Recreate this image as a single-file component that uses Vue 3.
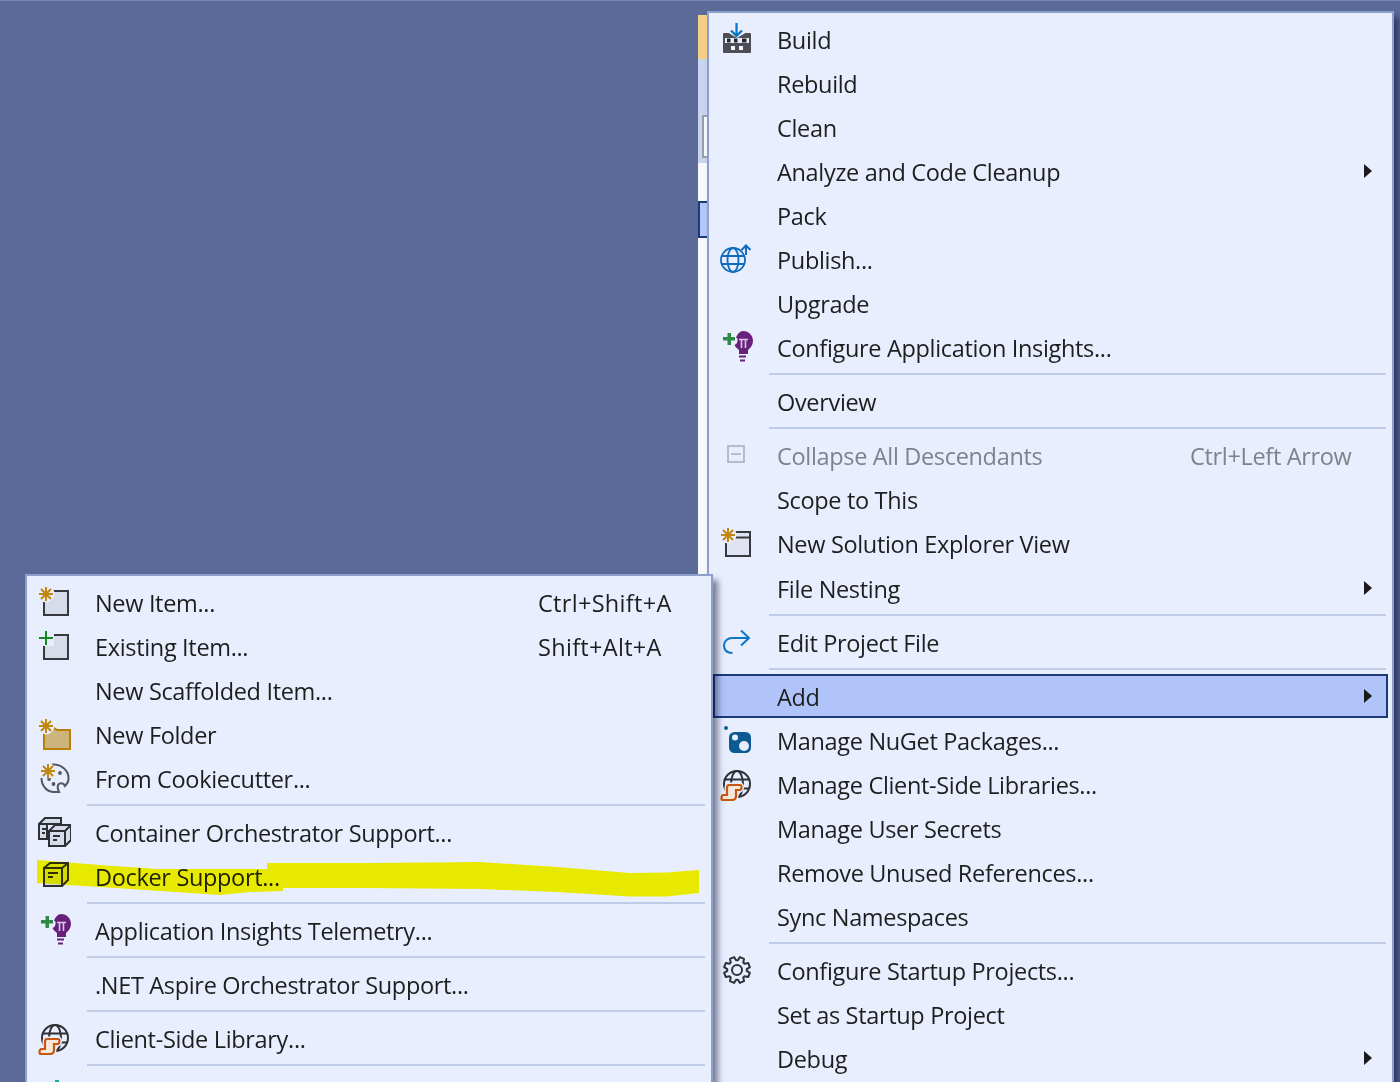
<script setup>
const mainItems = [
  { label: 'Build', icon: 'build' },
  { label: 'Rebuild' },
  { label: 'Clean' },
  { label: 'Analyze and Code Cleanup', sub: true },
  { label: 'Pack' },
  { label: 'Publish...', icon: 'publish' },
  { label: 'Upgrade' },
  { label: 'Configure Application Insights...', icon: 'insights' },
  { sep: true },
  { label: 'Overview' },
  { sep: true },
  { label: 'Collapse All Descendants', icon: 'collapse', shortcut: 'Ctrl+Left Arrow', disabled: true },
  { label: 'Scope to This' },
  { label: 'New Solution Explorer View', icon: 'newwin' },
  { label: 'File Nesting', sub: true, nudge: true },
  { sep: true },
  { label: 'Edit Project File', icon: 'edit' },
  { sep: true },
  { label: 'Add', sub: true, active: true },
  { label: 'Manage NuGet Packages...', icon: 'nuget' },
  { label: 'Manage Client-Side Libraries...', icon: 'globe' },
  { label: 'Manage User Secrets' },
  { label: 'Remove Unused References...' },
  { label: 'Sync Namespaces' },
  { sep: true },
  { label: 'Configure Startup Projects...', icon: 'gear' },
  { label: 'Set as Startup Project' },
  { label: 'Debug', sub: true }
]
const addItems = [
  { label: 'New Item...', icon: 'newitem', shortcut: 'Ctrl+Shift+A' },
  { label: 'Existing Item...', icon: 'existing', shortcut: 'Shift+Alt+A' },
  { label: 'New Scaffolded Item...' },
  { label: 'New Folder', icon: 'folder' },
  { label: 'From Cookiecutter...', icon: 'cookie' },
  { sep: true },
  { label: 'Container Orchestrator Support...', icon: 'containers' },
  { label: 'Docker Support...', icon: 'box' },
  { sep: true },
  { label: 'Application Insights Telemetry...', icon: 'insights' },
  { sep: true },
  { label: '.NET Aspire Orchestrator Support...' },
  { sep: true },
  { label: 'Client-Side Library...', icon: 'globe' },
  { sep: true },
  { label: '', icon: 'teal' }
]
const menus = [
  { cls: 'main', items: mainItems },
  { cls: 'add', items: addItems }
]
const starred = ['newwin', 'newitem', 'folder']
const gearPath = (() => {
  const pts = []
  const teeth = 8
  const p = (r, t) => `${(20 + r * Math.cos(t)).toFixed(2)} ${(16 + r * Math.sin(t)).toFixed(2)}`
  for (let i = 0; i < teeth; i++) {
    const a = (i / teeth) * Math.PI * 2 + Math.PI / 8
    pts.push(p(9.8, a - 0.3), p(13.2, a - 0.17), p(13.2, a + 0.17), p(9.8, a + 0.3))
  }
  return 'M' + pts.join('L') + 'Z'
})()
</script>

<template>
  <div class="stage">
    <div class="behind">
      <div class="b-orange"></div>
      <div class="b-tool"><div class="b-input"></div></div>
      <div class="b-white"></div>
      <div class="b-sel"></div>
      <div class="b-rest"></div>
    </div>

    <div v-for="menu in menus" :key="menu.cls" class="menu" :class="menu.cls">
      <template v-for="(item, i) in menu.items" :key="i">
        <div v-if="item.sep" class="sep"></div>
        <div v-else class="row" :class="{ active: item.active, disabled: item.disabled, nudge: item.nudge }">
          <div class="icon">
            <svg v-if="item.icon" width="36" height="36" viewBox="0 0 36 36">
              <g v-if="item.icon === 'build'">
                <path d="M6 11a1 1 0 0 1 1-1h26a1 1 0 0 1 1 1v18a1 1 0 0 1-1 1H7a1 1 0 0 1-1-1z" fill="#4d4e55"/>
                <rect x="8" y="15" width="24" height="5" fill="#e8eefe"/>
                <rect x="10" y="15.500" width="3.500" height="4" fill="#26272c"/>
                <rect x="17" y="15.500" width="3.500" height="4" fill="#26272c"/>
                <rect x="25" y="15.500" width="4.500" height="4" fill="#26272c"/>
                <rect x="14" y="23" width="4" height="4" fill="#f6f8ff"/>
                <rect x="22" y="23" width="4" height="4" fill="#f6f8ff"/>
                <path d="M10 9h20l-10 6z" fill="#e8eefe"/>
                <path d="M19.500 0v12.500M14 7.500l5.500 5.500 5.500-5.500" fill="none" stroke="#0a72c4" stroke-width="2.200"/>
              </g>
              <g v-else-if="item.icon === 'publish'" fill="none" stroke="#0f6cbd" stroke-width="1.800">
                <circle cx="16" cy="17" r="12"/>
                <ellipse cx="16" cy="17" rx="5.500" ry="12"/>
                <path d="M5 13h22M5 21h22"/>
                <path d="M29 12V3M24.500 7l4.500-4.500L33.500 7" stroke-width="2"/>
              </g>
              <g v-else-if="item.icon === 'insights'">
                <path d="M6 6h4.500V2h3.500v4H18v3.500h-4V14h-3.500V9.500H6z" fill="#2d8a45"/>
                <path d="M26 0c6 0 10 4.500 10 10 0 4-2.500 7-5 9v4h-9v-4c-2-1.500-3.500-3-4.500-5 2-1 3-2.500 3-4.500V8.500c0-1-.500-1.500-1.500-2C20.500 3 23 0 26 0z" fill="#68217a"/>
                <path d="M22 8.500h9M24.500 8.500V17M28.500 8.500V17" stroke="#d9c6e6" stroke-width="1.600"/>
                <path d="M22 25.500h7M23 29.500h5" stroke="#68217a" stroke-width="2"/>
              </g>
              <g v-else-if="item.icon === 'collapse'" fill="none" stroke="#b5bbcf" stroke-width="2">
                <rect x="11" y="7" width="16" height="16"/>
                <path d="M14 15h10"/>
              </g>
              <g v-else-if="item.icon === 'newwin' || item.icon === 'newitem' || item.icon === 'existing'">
                <path d="M9 5h24v24H9z" :fill="item.icon === 'newwin' ? '#dfe3f2' : '#d6dcea'" stroke="#37393f" stroke-width="2"/>
                <path v-if="item.icon === 'newwin'" d="M15 10.500h18" stroke="#37393f" stroke-width="2"/>
                <template v-if="item.icon === 'existing'">
                  <path d="M3 0h16v16H3z" fill="#e8eefe"/>
                  <path d="M11 1v14M4 8h14" stroke="#138a1f" stroke-width="2"/>
                </template>
              </g>
              <g v-else-if="item.icon === 'edit'" fill="none" stroke="#0f76c5" stroke-width="2">
                <path d="M15.500 27C10 27 7 24 7 19.500 7 15 11 12 15 12H31"/>
                <path d="M24 4.500l8 7.500-8 7.500"/>
              </g>
              <g v-else-if="item.icon === 'nuget'">
                <circle cx="9" cy="4" r="2" fill="#0d5a93"/>
                <rect x="12" y="8" width="22" height="21" rx="5.500" fill="#0d5a93"/>
                <circle cx="18" cy="13.500" r="3" fill="#e8eefe"/>
                <circle cx="27" cy="22" r="5" fill="#e8eefe"/>
              </g>
              <g v-else-if="item.icon === 'globe'">
                <g fill="none" stroke="#2f3136" stroke-width="2">
                  <circle cx="20" cy="16" r="13"/>
                  <ellipse cx="20" cy="16" rx="6" ry="13"/>
                  <path d="M8 11.500h24M8 20.500h24"/>
                </g>
                <path d="M12 17H23C25 17 25 21 23 22H19V28C19 31 17 32 15 32H6C4 32 4 28 6 27H10V20C10 18 11 17 12 17Z" fill="#f8e8dc" stroke="#e8eefe" stroke-width="5"/>
                <path d="M12 17H23C25 17 25 21 23 22H19V28C19 31 17 32 15 32H6C4 32 4 28 6 27H10V20C10 18 11 17 12 17Z" fill="#f8e8dc" stroke="#c9560f" stroke-width="2.200"/>
              </g>
              <g v-else-if="item.icon === 'gear'" fill="none" stroke="#303236" stroke-width="2" stroke-linejoin="round">
                <path :d="gearPath"/>
                <circle cx="20" cy="16" r="5"/>
              </g>
              <g v-else-if="item.icon === 'folder'">
                <path d="M9 12h8l2-2 3 2h13v19H9z" fill="#cdb47d" stroke="#b87f0b" stroke-width="2"/>
              </g>
              <g v-else-if="item.icon === 'cookie'">
                <path d="M17 2.600C26 2 34 8 33.500 17 33.500 20 32 22 30 24 28 20 24 21 23 23 22 26 23 28 24 30 22 30 21 30 19 30 12 30 6.500 24 6.500 16" fill="none" stroke="#55585e" stroke-width="2"/>
                <circle cx="14" cy="17" r="1.900" fill="#55585e"/>
                <circle cx="18.500" cy="22" r="1.900" fill="#55585e"/>
                <circle cx="25" cy="11" r="1.900" fill="#55585e"/>
                <circle cx="12" cy="8.500" r="8" fill="#e8eefe"/>
                <path d="M13 2v14M6 9h14M8 4l10 10M18 4 8 14" stroke="#c1860e" stroke-width="2"/>
              </g>
              <g v-else-if="item.icon === 'containers'" fill="none" stroke="#2e3036" stroke-width="2">
                <path d="M4 8l6-6h16v6H12v15H4z" fill="#d6dcea"/>
                <path d="M4 8h14" />
                <path d="M7 13h5M7 17h3"/>
                <path d="M14 15h16v15H14zM14 15l6-6h16v15l-6 6M30 15l6-6" fill="#d6dcea"/>
                <path d="M18 20h7M18 24h4"/>
              </g>
              <g v-else-if="item.icon === 'box'" fill="none" stroke="#2e3036" stroke-width="2">
                <path d="M9 8h18v18H9zM9 8l6-5h18v17l-6 6M27 8l6-5" fill="#d6dcea"/>
                <path d="M13 13h10M13 17h5"/>
              </g>
              <rect v-else-if="item.icon === 'teal'" x="20" y="4" width="4" height="6" fill="#1aa89a"/>
              <g v-if="starred.includes(item.icon)">
                <circle cx="11" cy="8" r="8.500" fill="#e8eefe"/>
                <path d="M11 1v14M4 8h14M6 3l10 10M16 3 6 13" stroke="#c1860e" stroke-width="2"/>
              </g>
            </svg>
          </div>
          <span class="label">{{ item.label }}</span>
          <span v-if="item.shortcut" class="shortcut">{{ item.shortcut }}</span>
          <svg v-if="item.sub" class="chev" width="8" height="14" viewBox="0 0 8 14"><path d="M0 0 8 7 0 14z" fill="#1a1a1a"/></svg>
        </div>
      </template>
    </div>

    <svg class="marker" width="680" height="48" viewBox="0 0 680 48">
      <path d="M0 2 63 7 120 11 230 11 230 5 330 5 443 4 520 9 593 15 630 14.500 662 12V35L630 38.500 593 38.500 520 34 443 31 330 30 246 30 246 33 213 34 183 37 63 29 0 25Z" fill="#e9e900"/>
    </svg>
  </div>
</template>

<style>
html, body { margin: 0; background: #5b6b99; }
</style>

<style scoped>
.stage {
  position: relative;
  width: 1400px;
  height: 1082px;
  overflow: hidden;
  background: #5b6a98;
  box-shadow: inset 0 1px 0 #7a88b0;
  font-family: "Open Sans", "Noto Sans", sans-serif;
  color: #1e1e1e;
}
.behind {
  position: absolute;
  left: 698px;
  top: 15px;
  width: 20px;
  height: 570px;
  display: flex;
  flex-direction: column;
}
.b-orange { height: 44px; background: #f6cf87; }
.b-tool { height: 104px; background: #c9d4ef; padding: 56px 0 0 4px; box-sizing: border-box; }
.b-input { height: 43px; box-sizing: border-box; background: #f7f9ff; border: 2px solid #9a9ea8; }
.b-white { height: 38px; background: #f7f9ff; }
.b-sel { height: 37px; box-sizing: border-box; background: #b4c7f8; border: 2px solid #1c3a74; }
.b-rest { flex: 1; background: #f7f9ff; }

.menu {
  position: absolute;
  box-sizing: border-box;
  background: #e8eefe;
  border: 2px solid #8f9fcb;
  box-shadow: 5px 6px 6px rgba(10, 15, 50, 0.5);
}
.main {
  left: 707px;
  top: 11px;
  width: 687px;
  height: 1100px;
  padding: 6px 6px 0 4px;
}
.add {
  left: 25px;
  top: 574px;
  width: 688px;
  height: 520px;
  padding: 6px 6px 0 4px;
}
.row {
  position: relative;
  display: flex;
  align-items: center;
  height: 44px;
  box-sizing: border-box;
  font-size: 23.500px;
  letter-spacing: -0.330px;
}
.nudge { margin-top: 1px; }
.row.active::before {
  content: "";
  position: absolute;
  left: 0;
  right: -2px;
  top: -2px;
  height: 44px;
  box-sizing: border-box;
  background: #b0c4f9;
  border: 2px solid #1c3a74;
}
.row.disabled { color: #7f828b; }
.icon {
  width: 64px;
  height: 44px;
  flex: none;
  display: flex;
  align-items: center;
  padding-left: 4px;
  box-sizing: border-box;
}
.label { position: relative; top: -1px; white-space: nowrap; }
.shortcut { position: absolute; top: 5px; white-space: nowrap; }
.main .shortcut { left: 477px; }
.add .shortcut { left: 507px; letter-spacing: 0.300px; }
.chev { position: absolute; right: 14px; top: 13px; }
.sep {
  height: 10px;
  margin-left: 56px;
  box-sizing: border-box;
  padding-top: 2px;
}
.sep::before {
  content: "";
  display: block;
  height: 2px;
  background: #c0cbe8;
}
.marker {
  position: absolute;
  left: 37px;
  top: 858px;
  mix-blend-mode: darken;
}
</style>
